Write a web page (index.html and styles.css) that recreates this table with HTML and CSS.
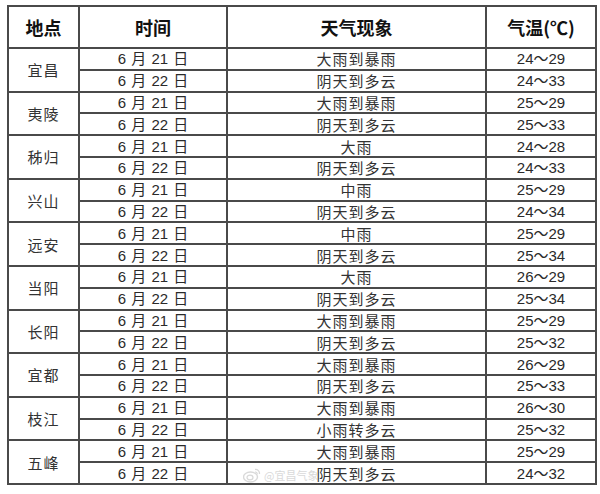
FILE: index.html
```html
<!DOCTYPE html>
<html lang="zh">
<head>
<meta charset="utf-8">
<link rel="stylesheet" href="styles.css">
</head>
<body>
<div class="page">
<table class="wx">
  <colgroup>
    <col class="c-loc"><col class="c-date"><col class="c-wx"><col class="c-temp">
  </colgroup>
  <thead>
    <tr class="head"><th>地点</th><th>时间</th><th>天气现象</th><th>气温(℃)</th></tr>
  </thead>
  <tbody>
    <tr><td class="loc" rowspan="2">宜昌</td><td class="date">6 月 21 日</td><td class="w">大雨到暴雨</td><td class="t">24～29</td></tr>
    <tr><td class="date">6 月 22 日</td><td class="w">阴天到多云</td><td class="t">24～33</td></tr>
    <tr><td class="loc" rowspan="2">夷陵</td><td class="date">6 月 21 日</td><td class="w">大雨到暴雨</td><td class="t">25～29</td></tr>
    <tr><td class="date">6 月 22 日</td><td class="w">阴天到多云</td><td class="t">25～33</td></tr>
    <tr><td class="loc" rowspan="2">秭归</td><td class="date">6 月 21 日</td><td class="w">大雨</td><td class="t">24～28</td></tr>
    <tr><td class="date">6 月 22 日</td><td class="w">阴天到多云</td><td class="t">24～33</td></tr>
    <tr><td class="loc" rowspan="2">兴山</td><td class="date">6 月 21 日</td><td class="w">中雨</td><td class="t">25～29</td></tr>
    <tr><td class="date">6 月 22 日</td><td class="w">阴天到多云</td><td class="t">24～34</td></tr>
    <tr><td class="loc" rowspan="2">远安</td><td class="date">6 月 21 日</td><td class="w">中雨</td><td class="t">25～29</td></tr>
    <tr><td class="date">6 月 22 日</td><td class="w">阴天到多云</td><td class="t">25～34</td></tr>
    <tr><td class="loc" rowspan="2">当阳</td><td class="date">6 月 21 日</td><td class="w">大雨</td><td class="t">26～29</td></tr>
    <tr><td class="date">6 月 22 日</td><td class="w">阴天到多云</td><td class="t">25～34</td></tr>
    <tr><td class="loc" rowspan="2">长阳</td><td class="date">6 月 21 日</td><td class="w">大雨到暴雨</td><td class="t">25～29</td></tr>
    <tr><td class="date">6 月 22 日</td><td class="w">阴天到多云</td><td class="t">25～32</td></tr>
    <tr><td class="loc" rowspan="2">宜都</td><td class="date">6 月 21 日</td><td class="w">大雨到暴雨</td><td class="t">26～29</td></tr>
    <tr><td class="date">6 月 22 日</td><td class="w">阴天到多云</td><td class="t">25～33</td></tr>
    <tr><td class="loc" rowspan="2">枝江</td><td class="date">6 月 21 日</td><td class="w">大雨到暴雨</td><td class="t">26～30</td></tr>
    <tr><td class="date">6 月 22 日</td><td class="w">小雨转多云</td><td class="t">25～32</td></tr>
    <tr><td class="loc" rowspan="2">五峰</td><td class="date">6 月 21 日</td><td class="w">大雨到暴雨</td><td class="t">25～29</td></tr>
    <tr><td class="date">6 月 22 日</td><td class="w">阴天到多云</td><td class="t">24～32</td></tr>
  </tbody>
</table>
<div class="mark">
  <svg class="weibo" width="18" height="16" viewBox="0 0 18 16">
    <ellipse cx="7.5" cy="10" rx="7" ry="5" fill="none" stroke="#bbb" stroke-width="1.4"/>
    <ellipse cx="7" cy="10.5" rx="3" ry="2.4" fill="none" stroke="#bbb" stroke-width="1.2"/>
    <path d="M12 2.5 A4 4 0 0 1 16.5 7" fill="none" stroke="#bbb" stroke-width="1.3"/>
    <path d="M12 5 A2 2 0 0 1 14.3 7.2" fill="none" stroke="#bbb" stroke-width="1.1"/>
  </svg>
  <span class="mark-text">@宜昌气象</span>
</div>
</div>
</body>
</html>
```
FILE: styles.css
```css
html, body {
  margin: 0;
  padding: 0;
  background: #fff;
}
.page {
  position: relative;
  padding: 5px 0 0 7px;
  width: 600px;
  height: 494px;
  box-sizing: border-box;
}
.wx {
  border-collapse: collapse;
  width: 589px;
  table-layout: fixed;
  border: 2px solid #333;
  font-family: "Liberation Sans", "Noto Sans CJK SC", sans-serif;
  color: #333;
}
.c-loc { width: 71px; }
.c-date { width: 148px; }
.c-wx { width: 259px; }
.c-temp { width: 110px; }
.wx th, .wx td {
  border: 2px solid #4a4a4a;
  padding: 0;
  text-align: center;
  vertical-align: middle;
  line-height: 1;
}
.wx th {
  height: 40px;
  font-family: "Noto Sans CJK SC", sans-serif;
  font-weight: 700;
  font-size: 18px;
  color: #111;
}
.wx td {
  height: 19.8px;
  font-size: 15px;
}
.loc {
  font-family: "Noto Sans CJK SC", sans-serif;
  letter-spacing: 1px;
}
.w {
  font-family: "Noto Sans CJK SC", sans-serif;
  letter-spacing: 1px;
}
.date {
  color: #2a2a2a;
  word-spacing: 1px;
}
.t {
  color: #2a2a2a;
}
.mark {
  position: absolute;
  left: 243px;
  top: 467px;
  display: flex;
  align-items: center;
  gap: 3px;
  opacity: 0.55;
}
.mark-text {
  font-family: "Noto Sans CJK SC", sans-serif;
  font-size: 11px;
  color: #bbb;
}
```
